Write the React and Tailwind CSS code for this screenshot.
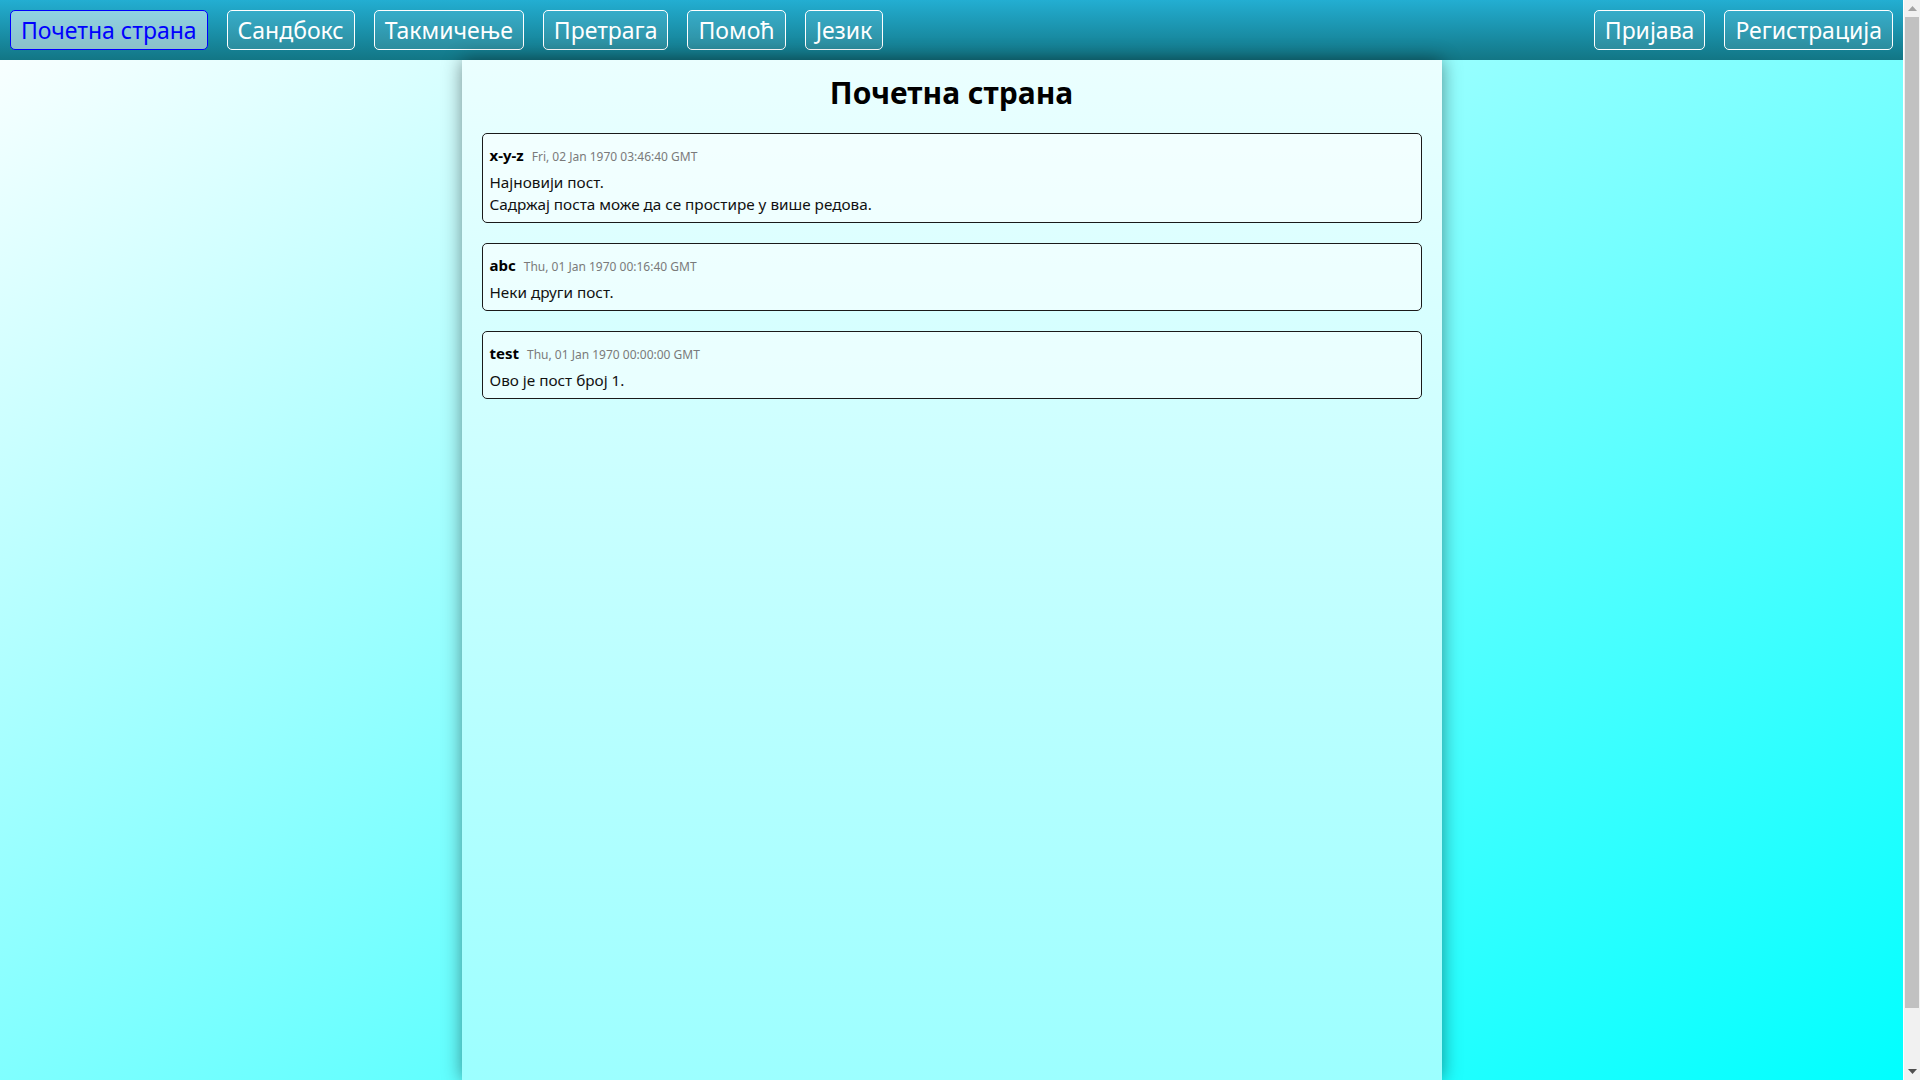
import React from "react";

const posts = [
  { user: "x-y-z", date: "Fri, 02 Jan 1970 03:46:40 GMT", lines: ["Најновији пост.", "Садржај поста може да се простире у више редова."] },
  { user: "abc", date: "Thu, 01 Jan 1970 00:16:40 GMT", lines: ["Неки други пост."] },
  { user: "test", date: "Thu, 01 Jan 1970 00:00:00 GMT", lines: ["Ово је пост број 1."] },
];

function NavButton({ children, active }) {
  return (
    <button
      className={
        active
          ? "h-[40px] px-[10px] rounded-[5px] border border-[#0000ff] bg-white/50 text-[#0000ff] text-[23px] leading-none"
          : "h-[40px] px-[10px] rounded-[5px] border border-white bg-white/10 text-white text-[23px] leading-none"
      }
    >
      {children}
    </button>
  );
}

function Scrollbar() {
  return (
    <div className="w-[17px] h-screen bg-[#f1f1f1] flex flex-col border-l border-white">
      <div className="h-[17px] flex items-center justify-center">
        <svg width="9" height="5" viewBox="0 0 9 5"><path d="M0 5 L4.5 0 L9 5 Z" fill="#a3a3a3" /></svg>
      </div>
      <div className="flex-1 px-[1px]">
        <div className="h-[991px] bg-[#c1c1c1]" />
      </div>
      <div className="h-[17px] flex items-center justify-center">
        <svg width="9" height="5" viewBox="0 0 9 5"><path d="M0 0 L9 0 L4.5 5 Z" fill="#505050" /></svg>
      </div>
    </div>
  );
}

export default function App() {
  return (
    <div className="flex w-full h-screen overflow-hidden font-['Segoe_UI','Noto_Sans',sans-serif]">
      <div className="flex-1 flex flex-col h-screen bg-[linear-gradient(to_bottom_right,#ffffff,#00ffff)]">
        <nav className="h-[60px] shrink-0 flex items-center justify-between pl-[10px] pr-[10px] bg-[linear-gradient(to_bottom,#23aed2,#127685)]">
          <div className="flex gap-[19px]">
            <NavButton active>Почетна страна</NavButton>
            <NavButton>Сандбокс</NavButton>
            <NavButton>Такмичење</NavButton>
            <NavButton>Претрага</NavButton>
            <NavButton>Помоћ</NavButton>
            <NavButton>Језик</NavButton>
          </div>
          <div className="flex gap-[19px]">
            <NavButton>Пријава</NavButton>
            <NavButton>Регистрација</NavButton>
          </div>
        </nav>
        <main className="flex-1 flex justify-center">
          <div className="w-[980px] px-[20px] pt-[11px] bg-[linear-gradient(to_bottom,#ebffff,#9cffff)] shadow-[0_0_18px_rgba(0,0,0,0.45)]">
            <h1 className="text-[30px] leading-[44px] font-bold text-center text-black mb-[18px]">Почетна страна</h1>
            <div className="flex flex-col gap-[20px]">
              {posts.map((p) => (
                <div key={p.user} className="rounded-[5px] border border-[#1a1a1a] bg-white/50 px-[7px] pt-[10px] pb-[7px]">
                  <div className="flex items-baseline h-[20px]">
                    <span className="text-[15px] font-bold text-black">{p.user}</span>
                    <span className="ml-[8px] text-[12px] text-[#7a7a7a]">{p.date}</span>
                  </div>
                  <div className="mt-[7px] text-[15.3px] leading-[22px] text-[#111]">
                    {p.lines.map((l) => (
                      <div key={l}>{l}</div>
                    ))}
                  </div>
                </div>
              ))}
            </div>
          </div>
        </main>
      </div>
      <Scrollbar />
    </div>
  );
}
